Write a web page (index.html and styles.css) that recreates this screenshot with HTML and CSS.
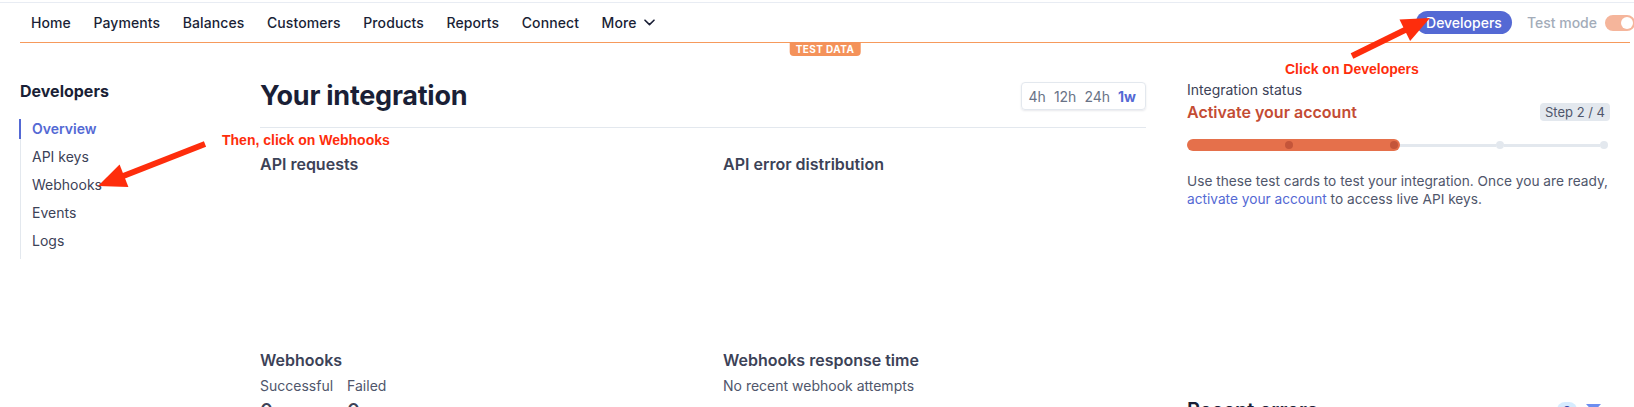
FILE: index.html
```html
<!DOCTYPE html>
<html lang="en">
<head>
<meta charset="utf-8">
<title>Developers overview</title>
<link rel="stylesheet" href="styles.css">
</head>
<body>
<div class="page">
  <div class="topline"></div>
  <header class="topnav">
    <nav class="mainnav">
      <a class="navlink">Home</a>
      <a class="navlink">Payments</a>
      <a class="navlink">Balances</a>
      <a class="navlink">Customers</a>
      <a class="navlink">Products</a>
      <a class="navlink">Reports</a>
      <a class="navlink">Connect</a>
      <a class="navlink more">More
        <svg class="chev" width="11" height="7" viewBox="0 0 11 7"><path d="M1 1.2 L5.5 5.6 L10 1.2" fill="none" stroke="#1a1f36" stroke-width="1.6" stroke-linecap="round" stroke-linejoin="round"/></svg>
      </a>
    </nav>
    <div class="nav-right">
      <span class="dev-btn">Developers</span>
      <span class="testmode">Test mode</span>
      <span class="toggle"><span class="knob"></span></span>
    </div>
    <span class="testdata">TEST DATA</span>
  </header>

  <div class="content">
    <aside class="sidebar">
      <h3 class="side-title">Developers</h3>
      <ul class="side-list">
        <li class="side-item active">Overview</li>
        <li class="side-item">API keys</li>
        <li class="side-item">Webhooks</li>
        <li class="side-item">Events</li>
        <li class="side-item">Logs</li>
      </ul>
    </aside>

    <main class="main">
      <div class="title-row">
        <h1 class="title">Your integration</h1>
        <div class="range">
          <span class="range-opt">4h</span>
          <span class="range-opt">12h</span>
          <span class="range-opt">24h</span>
          <span class="range-opt selected">1w</span>
        </div>
      </div>
      <div class="charts">
        <section class="chart">
          <h2 class="chart-title">API requests</h2>
        </section>
        <section class="chart">
          <h2 class="chart-title">API error distribution</h2>
        </section>
        <section class="chart">
          <h2 class="chart-title">Webhooks</h2>
          <div class="stats">
            <div class="stat">
              <div class="stat-label">Successful</div>
              <div class="stat-value">0</div>
            </div>
            <div class="stat">
              <div class="stat-label">Failed</div>
              <div class="stat-value">0</div>
            </div>
          </div>
        </section>
        <section class="chart">
          <h2 class="chart-title">Webhooks response time</h2>
          <div class="stat-label">No recent webhook attempts</div>
        </section>
      </div>
    </main>

    <section class="status">
      <div class="status-label">Integration status</div>
      <div class="status-row">
        <div class="status-title">Activate your account</div>
        <span class="step">Step 2 / 4</span>
      </div>
      <div class="progress">
        <div class="fill"><span class="dot dark"></span><span class="dot dark"></span></div>
        <div class="track">
          <span class="line"></span><span class="dot light"></span>
          <span class="line"></span><span class="dot light"></span>
        </div>
      </div>
      <p class="desc">Use these test cards to test your integration. Once you are ready, <a class="link">activate your account</a> to access live API keys.</p>
      <div class="recent-row">
        <h2 class="recent-title">Recent errors</h2>
        <div class="recent-tools">
          <span class="count-badge">0</span>
          <svg class="funnel" width="15" height="12" viewBox="0 0 15 12"><path d="M0 0 H15 L9 6.5 V12 L6 10.5 V6.5 Z" fill="#6d8ef0"/></svg>
        </div>
      </div>
    </section>
  </div>

  <div class="annotations">
    <svg class="arrows" width="1634" height="407" viewBox="0 0 1634 407">
      <line x1="1352" y1="56" x2="1406" y2="29.5" stroke="#fe2d0c" stroke-width="6"/>
      <polygon points="1430,18 1399.5,19.5 1410.1,41.1" fill="#fe2d0c"/>
      <line x1="205" y1="144" x2="122" y2="176.5" stroke="#fe2d0c" stroke-width="6"/>
      <polygon points="98,186 119.6,164.6 128.4,187" fill="#fe2d0c"/>
    </svg>
    <div class="note note-dev">Click on Developers</div>
    <div class="note note-web">Then, click on Webhooks</div>
  </div>
</div>
</body>
</html>
```

FILE: styles.css
```css
* { box-sizing: border-box; }

html, body {
  margin: 0;
  padding: 0;
  background: #ffffff;
}

body {
  font-family: Inter, "Noto Sans", "Liberation Sans", sans-serif;
  color: #1a1f36;
  font-size: 14px;
}

.page {
  position: relative;
  width: 1634px;
  height: 407px;
  overflow: hidden;
}

.topline {
  height: 1px;
  margin-top: 2px;
  background: #e8ecf3;
}

/* ---------- top navigation ---------- */
.topnav {
  position: relative;
  display: flex;
  align-items: center;
  height: 40px;
  margin: 0 4px 0 20px;
  padding-left: 11px;
  border-bottom: 1px solid #f69a5c;
}

.mainnav {
  display: flex;
  align-items: center;
  gap: 22.5px;
}

.navlink {
  font-size: 14px;
  font-weight: 500;
  letter-spacing: 0.1px;
  color: #1a1f36;
  line-height: 20px;
}

.more {
  display: flex;
  align-items: center;
  gap: 7px;
}

.chev { display: block; }

.nav-right {
  margin-left: auto;
  margin-right: -5px;
  display: flex;
  align-items: center;
}

.dev-btn {
  height: 23px;
  line-height: 23px;
  padding: 0 10px;
  border-radius: 12px;
  background: #5469d4;
  color: #ffffff;
  font-size: 14px;
  font-weight: 500;
}

.testmode {
  margin-left: 15px;
  color: #a3acb9;
  font-size: 14px;
  font-weight: 500;
}

.toggle {
  margin-left: 8px;
  width: 30px;
  height: 16px;
  border-radius: 8px;
  background: #f5b59b;
  display: flex;
  align-items: center;
  justify-content: flex-end;
  padding-right: 2px;
}

.knob {
  width: 12px;
  height: 12px;
  border-radius: 50%;
  background: #ffffff;
}

.testdata {
  position: absolute;
  left: 50%;
  top: 100%;
  transform: translateX(-50%);
  height: 14px;
  line-height: 14px;
  padding: 0 6px;
  background: #f4925a;
  color: #ffffff;
  font-size: 10px;
  font-weight: 700;
  letter-spacing: 0.4px;
  border-radius: 0 0 4px 4px;
}

/* ---------- content ---------- */
.content {
  display: flex;
  padding-left: 20px;
}

.sidebar {
  width: 240px;
  flex: none;
  padding-top: 38px;
}

.side-title {
  margin: 0;
  font-size: 16px;
  line-height: 20px;
  font-weight: 700;
  color: #1a1f36;
}

.side-list {
  list-style: none;
  margin: 18px 0 0 0;
  padding: 0 0 8px 0;
  border-left: 1px solid #e3e8ee;
  display: flex;
  flex-direction: column;
  gap: 8px;
}

.side-item {
  position: relative;
  height: 20px;
  line-height: 20px;
  padding-left: 11px;
  font-size: 14px;
  color: #3c4257;
}

.side-item.active {
  color: #5469d4;
  font-weight: 600;
}

.side-item.active::before {
  content: "";
  position: absolute;
  left: -2px;
  top: 0;
  width: 2px;
  height: 20px;
  background: #5469d4;
}

.main {
  width: 886px;
  flex: none;
  padding-top: 35px;
}

.title-row {
  display: flex;
  align-items: center;
  justify-content: space-between;
  padding-bottom: 13px;
  border-bottom: 1px solid #e3e8ee;
}

.title {
  margin: 0;
  font-size: 27px;
  line-height: 36px;
  font-weight: 700;
  color: #1a1f36;
  letter-spacing: -0.25px;
}

.range {
  display: flex;
  align-items: center;
  gap: 8px;
  height: 28px;
  padding: 0 9px 0 7px;
  border: 1px solid #e3e8ee;
  border-radius: 4px;
  box-shadow: 0 1px 2px rgba(60, 66, 87, 0.12);
  font-size: 14px;
  color: #697386;
}

.range-opt.selected {
  color: #5469d4;
  font-weight: 700;
}

.charts {
  display: grid;
  grid-template-columns: 1fr 1fr;
  column-gap: 40px;
  margin-top: 24px;
}

.chart:nth-child(-n+2) { height: 196px; }

.chart-title {
  margin: 0;
  font-size: 16px;
  line-height: 24px;
  font-weight: 600;
  color: #3c4257;
}

.stats {
  display: flex;
  gap: 14px;
}

.stat-label {
  margin-top: 4px;
  font-size: 14px;
  line-height: 20px;
  color: #4f566b;
}

.stat-value {
  margin-top: 1px;
  font-size: 20px;
  line-height: 28px;
  font-weight: 500;
  color: #3c4257;
}

/* ---------- status panel ---------- */
.status {
  width: 423px;
  flex: none;
  margin-left: 41px;
  padding-top: 37px;
}

.status-label {
  font-size: 14px;
  line-height: 20px;
  color: #3c4257;
}

.status-row {
  display: flex;
  align-items: center;
  justify-content: space-between;
  height: 24px;
}

.status-title {
  font-size: 16px;
  line-height: 24px;
  font-weight: 600;
  color: #c44c34;
}

.step {
  height: 18px;
  line-height: 18px;
  padding: 0 5px;
  border-radius: 4px;
  background: #e3e8ee;
  color: #4f566b;
  font-size: 13px;
}

.progress {
  display: flex;
  align-items: center;
  margin-top: 15px;
  height: 12px;
}

.fill {
  width: 213px;
  height: 12px;
  flex: none;
  border-radius: 6px;
  background: #e5704b;
  display: flex;
  align-items: center;
  padding-left: 98px;
  gap: 97px;
}

.dot {
  width: 8px;
  height: 8px;
  border-radius: 50%;
  flex: none;
}

.dot.dark { background: #c4553a; }
.dot.light { background: #e3e8ee; }

.track {
  flex: 1;
  display: flex;
  align-items: center;
  padding-right: 2px;
}

.line {
  flex: 1;
  height: 3px;
  background: #e3e8ee;
}

.desc {
  margin: 21px 0 0 0;
  font-size: 13.7px;
  line-height: 18px;
  color: #4f566b;
}

.link { color: #5469d4; }

.recent-row {
  display: flex;
  align-items: center;
  justify-content: space-between;
  margin-top: 188px;
  padding-right: 9px;
  height: 28px;
}

.recent-title {
  margin: 0;
  font-size: 20px;
  line-height: 28px;
  font-weight: 600;
  color: #1a1f36;
}

.recent-tools {
  display: flex;
  align-items: center;
  gap: 9px;
}

.count-badge {
  width: 20px;
  height: 16px;
  border-radius: 8px;
  background: #d6ecff;
  color: #3d4eac;
  font-size: 11px;
  font-weight: 700;
  text-align: center;
  line-height: 16px;
}

.funnel { display: block; }

/* ---------- screenshot annotations ---------- */
.annotations {
  position: absolute;
  inset: 0;
  pointer-events: none;
}

.arrows {
  position: absolute;
  left: 0;
  top: 0;
}

.note {
  position: absolute;
  font-family: "Liberation Sans", Arial, sans-serif;
  font-weight: 700;
  font-size: 14px;
  line-height: 16px;
  color: #fe2d0c;
  white-space: nowrap;
}

.note-dev { left: 1285px; top: 61px; }
.note-web { left: 222px; top: 132px; }
```
